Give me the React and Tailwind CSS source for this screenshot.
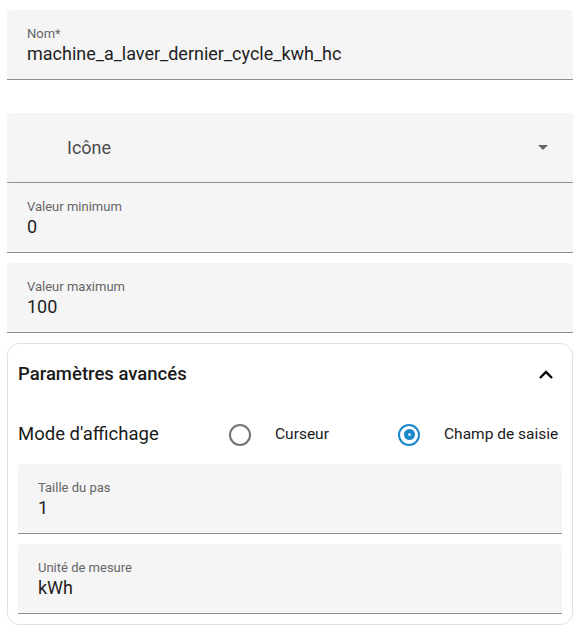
import React from "react";

const font = { fontFamily: "Roboto, 'Liberation Sans', sans-serif" };

function Field({ label, value, className = "" }) {
  return (
    <div
      className={`h-[70px] bg-[#f5f5f5] rounded-t-[4px] border-b border-[#8f8f8f] pl-[20px] pt-[15px] ${className}`}
    >
      <div className="text-[13px] leading-[17px] text-[#666666]">{label}</div>
      <div className="text-[18px] leading-[24px] text-[#1f1f1f]">{value}</div>
    </div>
  );
}

function Radio({ checked }) {
  return checked ? (
    <span className="w-[22px] h-[22px] rounded-full border-2 border-[#1a87cb] flex items-center justify-center">
      <span className="w-[11px] h-[11px] rounded-full bg-[#1a87cb] flex items-center justify-center">
        <span className="w-[3px] h-[3px] rounded-full bg-[#cfe6f4]" />
      </span>
    </span>
  ) : (
    <span className="w-[22px] h-[22px] rounded-full border-2 border-[#737373]" />
  );
}

export default function App() {
  return (
    <div className="w-[582px] h-[633px] bg-white pt-[10px] px-[7px] pr-[9px]" style={font}>
      {/* Nom */}
      <Field label="Nom*" value="machine_a_laver_dernier_cycle_kwh_hc" />

      {/* Icône select */}
      <div className="mt-[33px] h-[70px] bg-[#f5f5f5] rounded-t-[4px] border-b border-[#8f8f8f] flex items-center pl-[60px] pr-[25px]">
        <span className="flex-1 text-[18px] text-[#4a4a4a]">Icône</span>
        <svg width="10" height="5" viewBox="0 0 10 5">
          <path d="M0 0 L10 0 L5 5 Z" fill="#666666" />
        </svg>
      </div>

      <Field label="Valeur minimum" value="0" />
      <Field label="Valeur maximum" value="100" className="mt-[10px]" />

      {/* Paramètres avancés */}
      <div className="mt-[10px] border border-[#e0e0e0] rounded-[12px] px-[10px] pb-[10px]">
        <div className="h-[61px] flex items-center pt-[1px]">
          <span className="flex-1 text-[18.5px] font-medium text-[#1a1a1a]">
            Paramètres avancés
          </span>
          <svg width="24" height="24" viewBox="0 0 24 24" className="mr-[4px]">
            <path
              d="M6 15 L12 9 L18 15"
              fill="none"
              stroke="#000"
              strokeWidth="2.4"
            />
          </svg>
        </div>

        <div className="h-[59px] flex items-center">
          <span className="w-[211px] text-[18.5px] text-[#1a1a1a]">Mode d'affichage</span>
          <Radio />
          <span className="ml-[24px] w-[123px] text-[15.5px] text-[#1a1a1a]">Curseur</span>
          <Radio checked />
          <span className="ml-[24px] text-[15.5px] text-[#1a1a1a]">Champ de saisie</span>
        </div>

        <Field label="Taille du pas" value="1" />
        <Field label="Unité de mesure" value="kWh" className="mt-[10px]" />
      </div>
    </div>
  );
}
